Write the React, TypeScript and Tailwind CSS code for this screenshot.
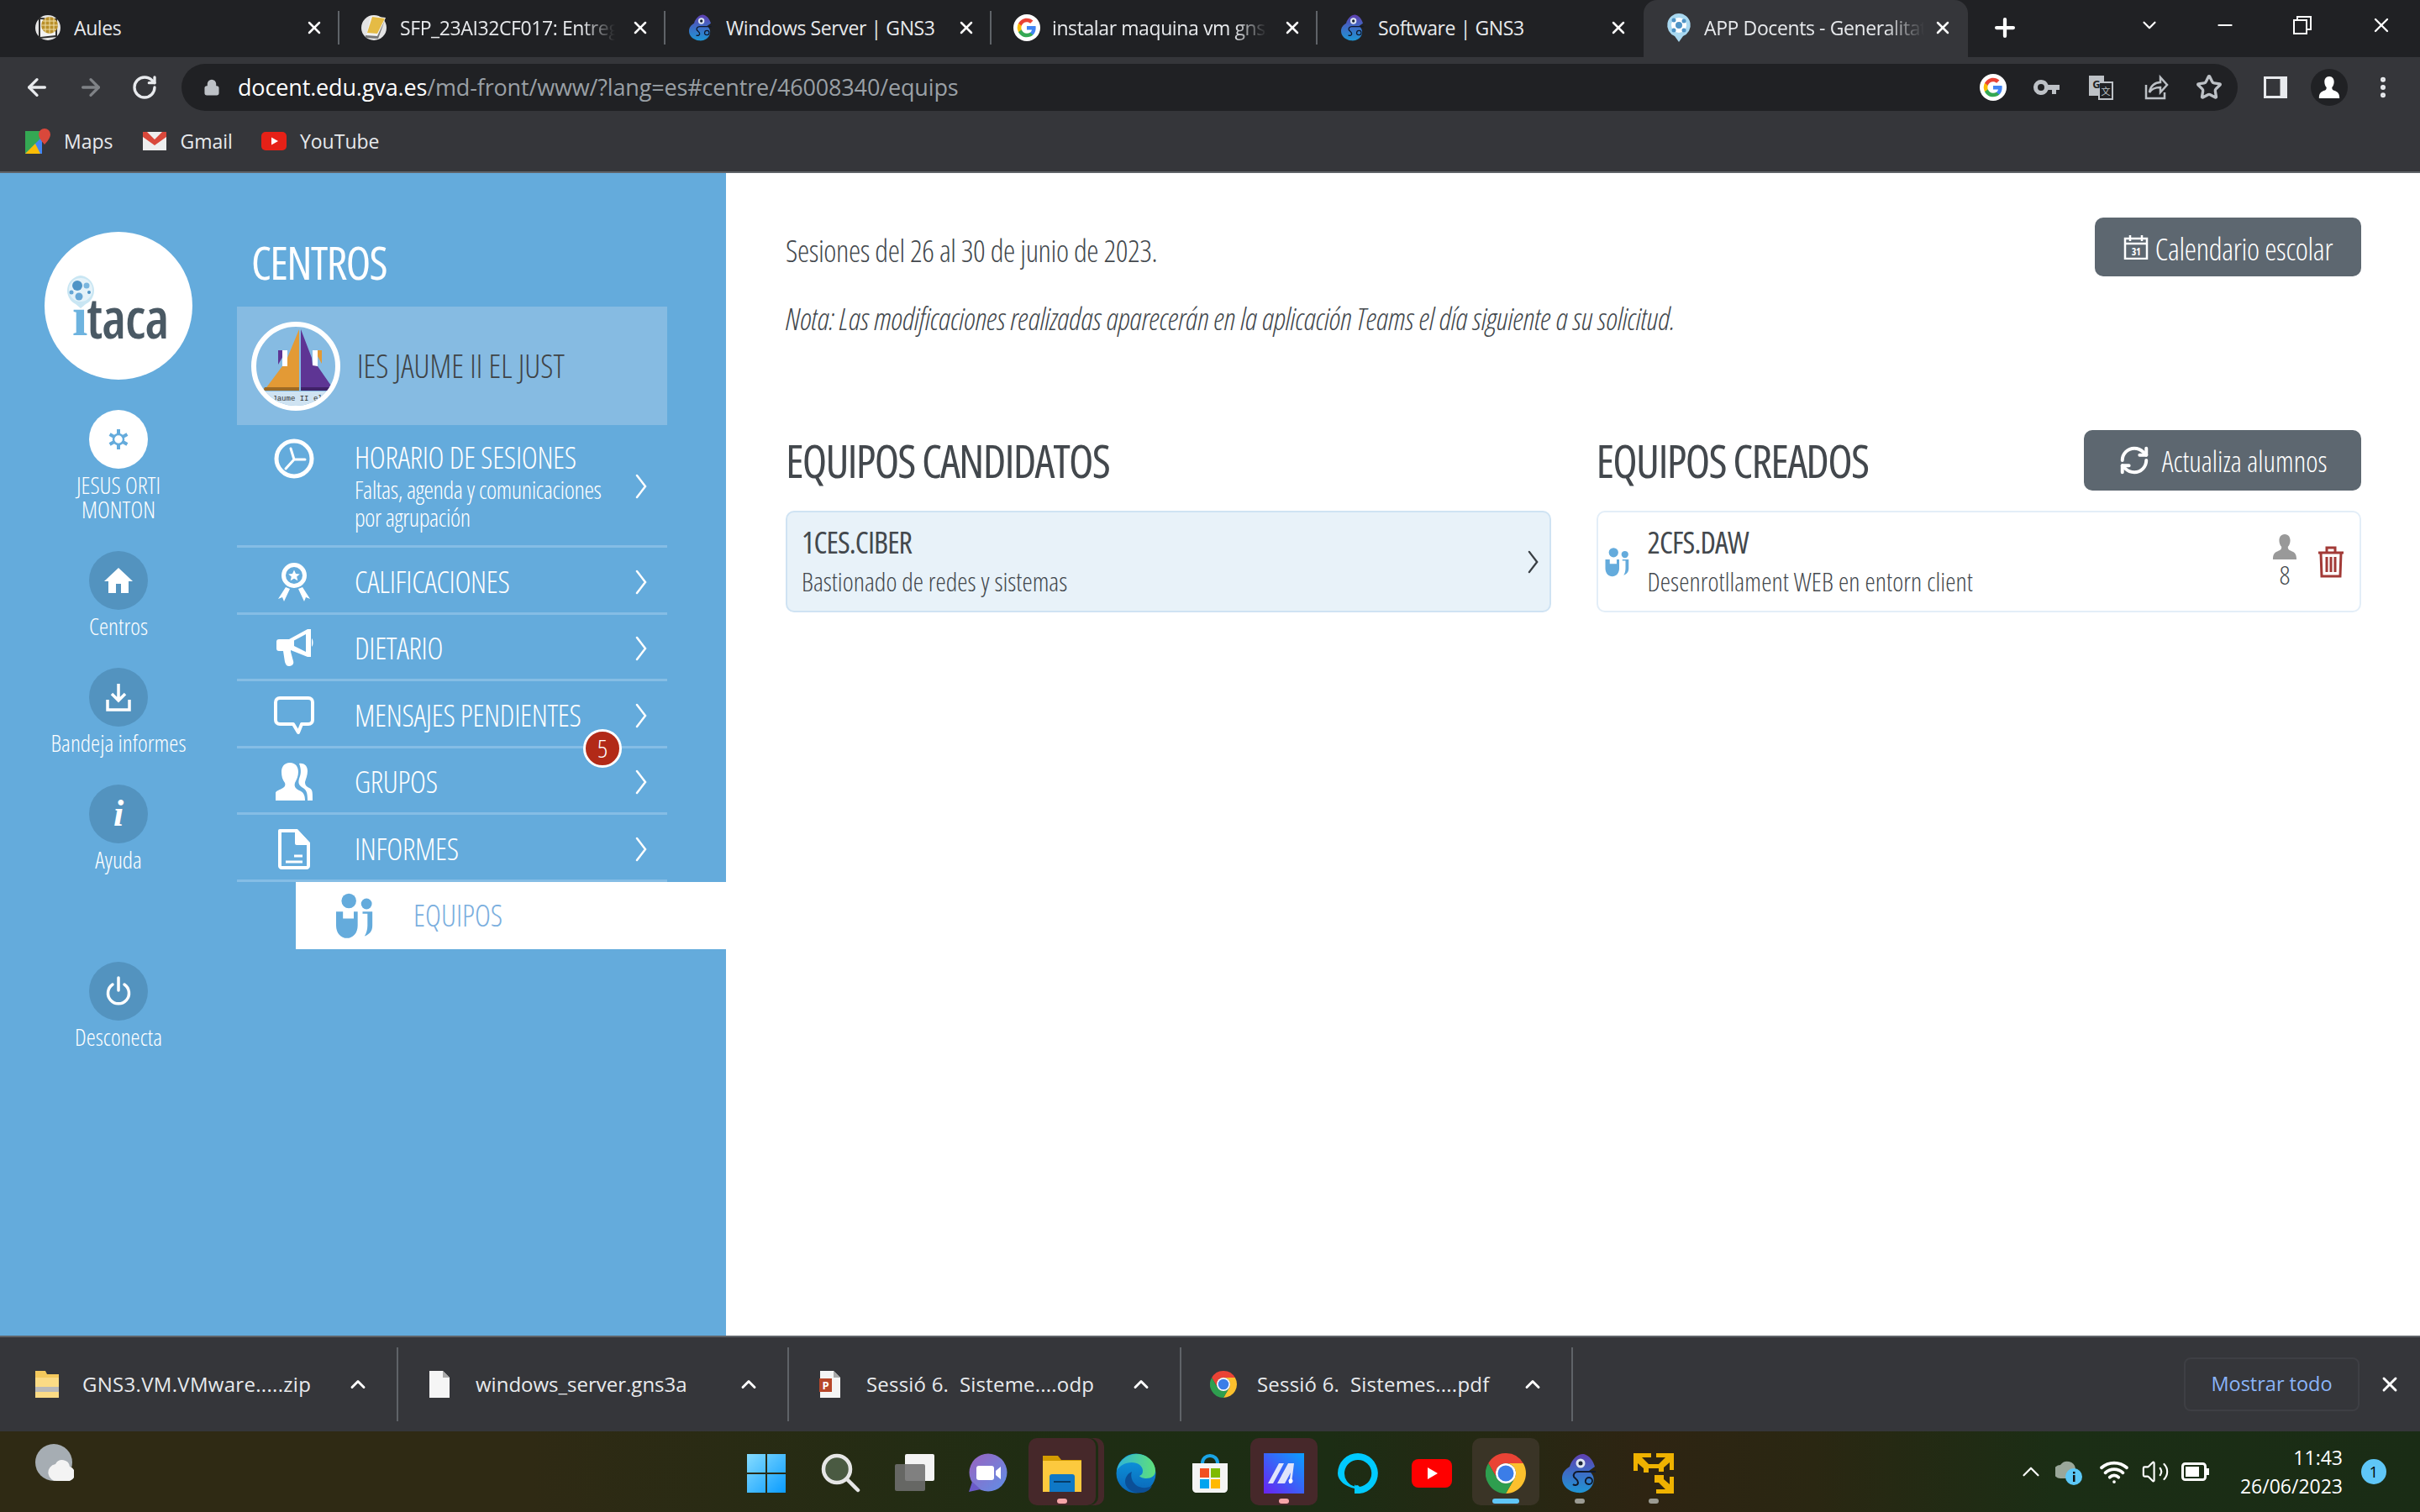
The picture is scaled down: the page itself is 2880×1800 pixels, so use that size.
import { ReactNode } from "react";
import { ArrowLeft, ArrowRight, RotateCw, Lock, Plus, X, ChevronDown, ChevronUp, Minus, MoreVertical, RefreshCw, Star, Wifi, Volume2 } from "lucide-react";

const cond = "font-['Open_Sans',sans-serif] font-light font-stretch-condensed";
const ui = "font-['Open_Sans',sans-serif]";

const GoogleG = ({ s = 32 }: { s?: number }) => (
  <svg width={s} height={s} viewBox="0 0 48 48">
    <circle cx="24" cy="24" r="24" fill="#fff" />
    <path d="M40 24.500c0-1.200-.1-2.300-.3-3.400H24v6.500h9c-.4 2.100-1.600 3.900-3.300 5.100v4.200h5.400c3.100-2.900 4.900-7.100 4.900-12.400z" fill="#4285f4" />
    <path d="M24 41c4.500 0 8.300-1.500 11.100-4.100l-5.400-4.200c-1.500 1-3.400 1.600-5.700 1.600-4.400 0-8.100-3-9.400-6.900H9v4.300C11.800 37.200 17.500 41 24 41z" fill="#34a853" />
    <path d="M14.600 27.400c-.7-2.100-.7-4.700 0-6.800v-4.300H9a17 17 0 0 0 0 15.400z" fill="#fbbc05" />
    <path d="M24 13.700c2.500 0 4.700.9 6.400 2.500l4.800-4.800C32.300 8.700 28.500 7 24 7 17.500 7 11.800 10.800 9 16.300l5.600 4.300c1.300-3.900 5-6.900 9.400-6.900z" fill="#ea4335" />
  </svg>
);

const ChromeLogo = ({ s = 48 }: { s?: number }) => (
  <svg width={s} height={s} viewBox="0 0 48 48">
    <path d="M3.200 12A24 24 0 0 1 44.780 12H24A12 12 0 0 0 13.600 30z" fill="#ea4335" />
    <path d="M44.780 12A24 24 0 0 1 24 48L34.400 30A12 12 0 0 0 24 12z" fill="#fbc02d" />
    <path d="M24 48A24 24 0 0 1 3.200 12L13.600 30A12 12 0 0 0 34.400 30z" fill="#2e9e4f" />
    <circle cx="24" cy="24" r="12" fill="#fff" />
    <circle cx="24" cy="24" r="9.500" fill="#3b7de8" />
  </svg>
);

const Chameleon = ({ s = 32 }: { s?: number }) => (
  <svg width={s} height={s} viewBox="0 0 48 48">
    <defs>
      <linearGradient id="cham" x1="0" y1="0" x2="0" y2="1">
        <stop offset="0" stopColor="#5f3fb0" />
        <stop offset="0.45" stopColor="#3f6ac4" />
        <stop offset="1" stopColor="#1f95d4" />
      </linearGradient>
    </defs>
    <path d="M12 16C15 6 23 0 29 1c7 2 11 8 13 15l-7 5c5 4 7 9 5 15-3 8-11 12-19 11C11 46 3 39 3 30c0-7 4-11 9-14z" fill="url(#cham)" />
    <circle cx="25" cy="12" r="5.500" fill="#dfe6f2" />
    <circle cx="25" cy="12" r="2.500" fill="#1a2438" />
    <path d="M43 22H22c-4 0-6 3-5 6 1 2 5 3 5 7 0 3-4 4-6 2" fill="none" stroke="#10192a" strokeWidth="2" />
    <path d="M31 33a4 4 0 1 1 4 4c-3 0-5-2-4-5" fill="none" stroke="#10192a" strokeWidth="1.800" />
  </svg>
);

const TeamIcon = ({ s = 48, c = "#64abdc" }: { s?: number; c?: string }) => (
  <svg width={s} height={s} viewBox="0 0 48 48">
    <circle cx="19" cy="9" r="7.500" fill={c} />
    <circle cx="37" cy="12" r="5.500" fill={c} />
    <path d="M6 20h7v7h11v-7h4v14c0 8-5 13-11 13S6 42 6 34z" fill={c} />
    <path d="M33 20h10v14c0 6-3 9-8 11 2-3 3-7 3-11V22h-5z" fill={c} />
  </svg>
);

const Person = ({ s = 32, c = "#999" }: { s?: number; c?: string }) => (
  <svg width={s} height={s} viewBox="0 0 32 32">
    <path d="M16 0c5 0 7 4 7 8 0 3-1 6-3 8 0 3 1 4 4 5 4 2 7 3 7 11H1c0-8 3-9 7-11 3-1 4-2 4-5-2-2-3-5-3-8 0-4 2-8 7-8z" fill={c} />
  </svg>
);

const menuIcons: Record<string, ReactNode> = {
  clock: (
    <svg width="48" height="48" viewBox="0 0 48 48" fill="none" stroke="#fff" strokeWidth="5" strokeLinecap="round">
      <circle cx="24" cy="24" r="21" />
      <path d="M24 25 20 12M24 25h13M24 25 14 36" strokeWidth="3" />
    </svg>
  ),
  award: (
    <svg width="48" height="48" viewBox="0 0 48 48">
      <circle cx="24" cy="16" r="12.500" fill="none" stroke="#fff" strokeWidth="5" />
      <path d="M24 9.500l2 4.500 4.800.4-3.600 3.100 1.100 4.700-4.300-2.500-4.300 2.500 1.100-4.700-3.600-3.100 4.800-.4z" fill="#fff" />
      <path d="M14 30l5 2-7 15-2-5-5 2zM34 30l-5 2 7 15 2-5 5 2z" fill="#fff" />
    </svg>
  ),
  mega: (
    <svg width="48" height="48" viewBox="0 0 48 48">
      <path d="M3 16c0-2 1-3 3-3h12L40 1h4v33h-4L20 26v2l3 11c1 3-1 6-5 6-3 0-4-2-5-5l-2-13H6c-2 0-3-1-3-3z" fill="#fff" />
      <path d="M24 14.500 38 7v21l-14-7z" fill="#64abdc" />
      <path d="M45 12c2 2 2 8 0 10z" fill="#fff" />
    </svg>
  ),
  bubble: (
    <svg width="48" height="48" viewBox="0 0 48 48">
      <path d="M7 3h34c3 0 5 2 5 5v21c0 3-2 5-5 5H33l-4 10-6-10H7c-3 0-5-2-5-5V8c0-3 2-5 5-5z" fill="none" stroke="#fff" strokeWidth="4" strokeLinejoin="round" />
    </svg>
  ),
  people: (
    <svg width="48" height="48" viewBox="0 0 48 48">
      <path d="M30 2c7-1 10 4 10 9 0 5-2 9-3 13 0 3 1 5 5 7 4 2 4 4 4 15h-6c0-9-1-13-7-16-4-3-4-6-3-10 2-5 3-10 0-18z" fill="#fff" />
      <path d="M19 1c7 0 10 5 10 11 0 5-2 9-4 13-1 4 0 6 5 9 5 2 7 5 7 12H2v-9c0-2 3-3 7-5 4-2 5-4 4-7-3-4-4-8-4-13C9 6 12 1 19 1z" fill="#fff" />
    </svg>
  ),
  doc: (
    <svg width="48" height="48" viewBox="0 0 48 48" fill="none" stroke="#fff" strokeWidth="4" strokeLinejoin="round">
      <path d="M7 2h20l14 15v27c0 1-1 2-2 2H9c-1 0-2-1-2-2z" />
      <path d="M27 2v15h14z" fill="#fff" />
      <path d="M14 39h20M24 32h10" strokeWidth="3" />
    </svg>
  ),
};

const menu = [
  { icon: "award", label: "CALIFICACIONES" },
  { icon: "mega", label: "DIETARIO" },
  { icon: "bubble", label: "MENSAJES PENDIENTES", badge: "5" },
  { icon: "people", label: "GRUPOS" },
  { icon: "doc", label: "INFORMES" },
];

const Chevron = ({ c = "#fff", h = 30 }: { c?: string; h?: number }) => (
  <svg width={h * 0.5} height={h} viewBox="0 0 15 30" fill="none" stroke={c} strokeWidth="2.500" strokeLinecap="round">
    <path d="M2 2l10 13L2 28" />
  </svg>
);

const RailItem = ({ icon, label, className, light }: { icon: ReactNode; label: ReactNode; className: string; light?: boolean }) => (
  <div className={`flex flex-col items-center ${className}`}>
    <div className={`flex h-[70px] w-[70px] items-center justify-center rounded-full ${light ? "bg-white" : "bg-[#5393bf]"}`}>{icon}</div>
    <div className={`${cond} mt-[5px] text-center text-[28px] leading-[29px] text-white`}>{label}</div>
  </div>
);

const Rail = () => (
  <div className="flex w-[282px] shrink-0 flex-col items-center pt-[70px]">
    <div className="flex h-[176px] w-[176px] flex-col rounded-full bg-white pt-[51px]">
      <svg width="38" height="41" viewBox="0 0 38 41" className="relative z-10 ml-[24px] shrink-0">
        <path d="M19 1a18 18 0 0 1 6 34l-6 5-6-5A18 18 0 0 1 19 1z" fill="#c9e6f3" />
        <circle cx="19" cy="18" r="14" fill="#e4f2f9" />
        <circle cx="15" cy="13" r="6" fill="#4f94c6" />
        <circle cx="26" cy="13" r="3.500" fill="#7ab6de" />
        <circle cx="29" cy="21" r="2" fill="#4f94c6" />
        <circle cx="17" cy="26" r="4.500" fill="#66a7d6" />
        <circle cx="8" cy="21" r="2.500" fill="#66a7d6" />
      </svg>
      <div className={`${ui} -mt-[15px] ml-[33px] flex whitespace-nowrap text-[66px] font-semibold leading-[48px] tracking-[-1px] font-stretch-semi-condensed text-[#4a5964]`}>
        <span className="font-['Liberation_Serif',serif] font-bold text-[#6db3df]">i</span>taca
      </div>
    </div>
    <RailItem
      light
      className="mt-[36px]"
      label={<>JESUS ORTI<br />MONTON</>}
      icon={
        <svg width="28" height="30" viewBox="0 0 28 30" fill="none" stroke="#64abdc">
          <circle cx="14" cy="15" r="6" strokeWidth="2.500" />
          <path d="M14 9V3M14 21v6M8.800 12 3.600 9M19.200 18l5.200 3M8.800 18l-5.200 3M19.200 12l5.200-3" strokeWidth="4" />
        </svg>
      }
    />
    <RailItem
      className="mt-[35px]"
      label="Centros"
      icon={
        <svg width="36" height="36" viewBox="0 0 36 36" fill="#fff">
          <path d="M18 3 1 19h5v14h9V22h6v11h9V19h5z" />
        </svg>
      }
    />
    <RailItem
      className="mt-[35px]"
      label="Bandeja informes"
      icon={
        <svg width="30" height="34" viewBox="0 0 30 34" fill="none" stroke="#fff" strokeWidth="3.500">
          <path d="M15 1v19M7 13l8 8 8-8M2 20v12h26V20" />
        </svg>
      }
    />
    <RailItem
      className="mt-[35px]"
      label="Ayuda"
      icon={<span className="font-['Liberation_Serif',serif] text-[44px] font-bold italic leading-none text-white">i</span>}
    />
    <RailItem
      className="mt-[107px]"
      label="Desconecta"
      icon={
        <svg width="30" height="36" viewBox="0 0 30 36" fill="none" stroke="#fff" strokeWidth="3.500" strokeLinecap="round">
          <path d="M15 2v15M8 10a12.500 12.500 0 1 0 14 0" />
        </svg>
      }
    />
  </div>
);

const SchoolLogo = () => (
  <div className="h-[106px] w-[106px] shrink-0 overflow-hidden rounded-full border-[6px] border-white">
    <svg width="94" height="94" viewBox="0 0 94 94">
      <path d="M26 28h10L26 45z" fill="#5e3594" />
      <path d="M69 28h9v16z" fill="#e39a35" />
      <path d="M31 28h6v19h-6zM67 28h6v19h-6z" fill="#fff" />
      <path d="M51 3v72H10l21-28h6V37z" fill="#e39a35" />
      <path d="M53 3l13 34 1 9 6 1 18 26v3H53z" fill="#5e3594" />
      <path d="M10 72h41v4H8z" fill="#9d6a25" />
      <path d="M53 72h38v4H53z" fill="#402267" />
      <rect x="0" y="77" width="94" height="17" fill="#cfe3f2" />
      <text x="49" y="88" textAnchor="middle" fontSize="9" fontFamily="Liberation Mono" fill="#333">Jaume II el</text>
    </svg>
  </div>
);

const Sidebar = () => (
  <aside className="flex w-[864px] shrink-0 bg-[#64abdc]">
    <Rail />
    <div className="flex min-w-0 flex-1 flex-col">
      <h2 className={`${cond} ml-[17px] mt-[78px] h-[81px] text-[54px] font-normal leading-[56px] tracking-[-1.600px] text-white`}>CENTROS</h2>
      <div className="mr-[70px] flex h-[141px] items-center bg-[#86bbe2] pl-[17px]">
        <SchoolLogo />
        <span className={`${cond} ml-[20px] text-[38px] text-[#3f4346]`}>IES JAUME II EL JUST</span>
      </div>
      <div className="mr-[70px] flex h-[146px] border-b-[3px] border-[#85bde5]">
        <div className="ml-[44px] mt-[16px] h-[48px] w-[48px] shrink-0">{menuIcons.clock}</div>
        <div className="ml-[48px] mt-[17px] w-[310px]">
          <div className={`${cond} text-[36px] leading-[43px] tracking-[-0.300px] text-white`}>HORARIO DE SESIONES</div>
          <div className={`${cond} text-[29px] leading-[33px] tracking-[-0.400px] text-white`}>Faltas, agenda y comunicaciones por agrupación</div>
        </div>
        <div className="ml-auto mr-[23px] mt-[58px]"><Chevron /></div>
      </div>
      {menu.map((m) => (
        <div key={m.label} className="relative mr-[70px] flex h-[79.500px] items-center border-b-[3px] border-[#85bde5] pt-[5px]">
          <div className="ml-[44px] h-[48px] w-[48px] shrink-0">{menuIcons[m.icon]}</div>
          <span className={`${cond} ml-[48px] text-[36px] tracking-[-0.300px] text-white`}>{m.label}</span>
          <div className="ml-auto mr-[23px] flex"><Chevron /></div>
          {m.badge && (
            <div className={`${ui} absolute bottom-[-26px] right-[54px] z-10 flex h-[46px] w-[46px] items-center justify-center rounded-full border-[3px] border-white bg-[#b22a17] text-[30px] font-light font-stretch-condensed text-white`}>
              {m.badge}
            </div>
          )}
        </div>
      ))}
      <div className="ml-[70px] flex h-[80px] items-center bg-white">
        <div className="ml-[41px] h-[56px] w-[56px]"><TeamIcon s={56} /></div>
        <span className={`${cond} ml-[43px] text-[36px] text-[#7aaede]`}>EQUIPOS</span>
      </div>
    </div>
  </aside>
);

const GreyButton = ({ children, className }: { children: ReactNode; className: string }) => (
  <div className={`${cond} flex items-center justify-center rounded-[10px] bg-[#5d6770] text-white ${className}`}>{children}</div>
);

const Main = () => (
  <main className="relative min-w-0 flex-1 bg-white pl-[71px] pr-[70px] pt-[53px] text-[#43484d]">
    <div className="flex justify-between">
      <p className={`${cond} mt-[13px] text-[36px] tracking-[-0.400px]`}>Sesiones del 26 al 30 de junio de 2023.</p>
      <GreyButton className="h-[70px] w-[317px] gap-[8px] text-[36px] tracking-[-0.300px]">
        <svg width="30" height="30" viewBox="0 0 30 30" fill="none" stroke="#fff" strokeWidth="2.500">
          <path d="M2 5h26v24H2zM2 11h26" />
          <path d="M8 1v7M22 1v7" />
          <text x="15" y="25" textAnchor="middle" fontSize="12" fontWeight="700" fontFamily="Open Sans" fill="#fff" stroke="none">31</text>
        </svg>
        <span className="pt-[6px]">Calendario escolar</span>
      </GreyButton>
    </div>
    <p className={`${cond} mt-[24px] text-[36px] italic tracking-[-0.160px]`}>Nota: Las modificaciones realizadas aparecerán en la aplicación Teams el día siguiente a su solicitud.</p>
    <div className="mt-[105px] grid grid-cols-2 gap-[54px]">
      <section>
        <h2 className={`${cond} flex h-[72px] items-center text-[54px] font-normal tracking-[-1.800px]`}>EQUIPOS CANDIDATOS</h2>
        <div className="mt-[24px] flex h-[121px] items-center rounded-[10px] border-2 border-[#cfe3f3] bg-[#e8f2f9] pl-[17px] pr-[12px]">
          <div>
            <div className={`${cond} text-[36px] font-normal leading-[46px] tracking-[-0.900px]`}>1CES.CIBER</div>
            <div className={`${cond} text-[31px] leading-[46px]`}>Bastionado de redes y sistemas</div>
          </div>
          <div className="ml-auto"><Chevron c="#3a3f44" h={28} /></div>
        </div>
      </section>
      <section>
        <div className="flex h-[72px] items-center justify-between">
          <h2 className={`${cond} text-[54px] font-normal tracking-[-1.700px]`}>EQUIPOS CREADOS</h2>
          <GreyButton className="h-[72px] w-[330px] gap-[14px] text-[34px]">
            <RefreshCw size={38} strokeWidth={2.500} />
            <span className="pt-[2px]">Actualiza alumnos</span>
          </GreyButton>
        </div>
        <div className="mt-[24px] flex h-[121px] items-center rounded-[10px] border-2 border-[#e3eef8] pl-[4px] pr-[18px]">
          <TeamIcon s={36} />
          <div className="ml-[19px]">
            <div className={`${cond} text-[36px] font-normal leading-[46px] tracking-[-0.900px]`}>2CFS.DAW</div>
            <div className={`${cond} text-[31px] leading-[46px] tracking-[0.100px]`}>Desenrotllament WEB en entorn client</div>
          </div>
          <div className="ml-auto flex flex-col items-center">
            <Person s={30} />
            <span className={`${cond} text-[31px] leading-[36px]`}>8</span>
          </div>
          <svg width="32" height="38" viewBox="0 0 32 38" fill="none" stroke="#a23a37" strokeWidth="3" className="ml-[24px]">
            <path d="M1 8h30M11 7V2h10v5M4 8l1 28h22l1-28M11 13v18M16 13v18M21 13v18" />
          </svg>
        </div>
      </section>
    </div>
  </main>
);

const AulesIcon = () => (
  <svg width="32" height="32" viewBox="0 0 32 32">
    <circle cx="15" cy="16" r="15" fill="#e4e4e4" />
    <path d="M4 4l22 1v22L4 29z" fill="#2e2e2e" />
    <path d="M6 6l18 1v18L6 27z" fill="#f2f2f2" />
    <circle cx="17" cy="13" r="10" fill="#b98f2a" />
    <path d="M7 13h20M17 3v20M9 8h16M9 18h16M12 4v18M22 4v18" stroke="#f0dfa8" strokeWidth="1" />
  </svg>
);

const SfpIcon = () => (
  <svg width="32" height="32" viewBox="0 0 32 32">
    <circle cx="15" cy="16" r="15" fill="#e4e4e4" />
    <path d="M11 2l18 2-9 22-14-1z" fill="#f2f2f2" />
    <path d="M13 3l15 2-9 18L7 22z" fill="#e5bb45" />
    <path d="M5 25l14 1 9-19-8 22-15-1z" fill="#777" />
  </svg>
);

const tabs = [
  { t: "Aules", i: <AulesIcon /> },
  { t: "SFP_23AI32CF017: Entrega", i: <SfpIcon />, fade: true },
  { t: "Windows Server | GNS3", i: <Chameleon /> },
  { t: "instalar maquina vm gns3", i: <GoogleG />, fade: true },
  { t: "Software | GNS3", i: <Chameleon /> },
];

const TabStrip = () => (
  <div className={`${ui} flex h-[68px] shrink-0 items-end bg-[#202124] pl-[16px] text-[23px] tracking-[-0.400px] text-[#e8eaed]`}>
    {tabs.map((tab, i) => (
      <div key={tab.t} className="flex h-[68px] w-[388px] shrink-0 items-center pb-[2px]">
        <div className="flex h-[40px] w-full items-center border-r-2 border-[#5f6368] pl-[26px] pr-[16px]" style={i === 4 ? { borderRightColor: "transparent" } : undefined}>
          <div className="h-[32px] w-[32px] shrink-0">{tab.i}</div>
          <span className={`ml-[14px] min-w-0 flex-1 overflow-hidden whitespace-nowrap ${tab.fade ? "pr-[12px] [mask-image:linear-gradient(to_right,black_82%,transparent_97%)]" : ""}`}>{tab.t}</span>
          <X size={24} strokeWidth={2.500} className="ml-[10px] shrink-0 text-white" />
        </div>
      </div>
    ))}
    <div className="flex h-[68px] w-[386px] shrink-0 items-center rounded-t-[16px] bg-[#35363a] pb-[2px] pl-[26px] pr-[18px]">
      <svg width="32" height="36" viewBox="0 0 32 36" className="shrink-0">
        <path d="M16 1a14 14 0 0 1 5 27l-5 7-5-7A14 14 0 0 1 16 1z" fill="#a9d8f0" />
        <circle cx="16" cy="15" r="9" fill="#fff" />
        <circle cx="16" cy="15" r="4" fill="#4f94c6" />
        <circle cx="10" cy="9" r="2.500" fill="#4f94c6" />
        <circle cx="22" cy="10" r="2.500" fill="#4f94c6" />
        <circle cx="10" cy="21" r="2.500" fill="#4f94c6" />
        <circle cx="22" cy="21" r="2.500" fill="#4f94c6" />
      </svg>
      <span className="ml-[14px] min-w-0 flex-1 overflow-hidden whitespace-nowrap [mask-image:linear-gradient(to_right,black_82%,transparent)]">APP Docents - Generalitat Valenciana</span>
      <X size={24} strokeWidth={2.500} className="ml-[10px] shrink-0 text-white" />
    </div>
    <div className="flex h-[68px] flex-1 items-center pb-[2px] text-white">
      <Plus size={34} strokeWidth={3} className="ml-[27px]" />
      <ChevronDown size={26} strokeWidth={2} className="ml-[142px] -mt-[6px]" />
      <Minus size={26} strokeWidth={2} className="ml-[64px] -mt-[6px]" />
      <svg width="22" height="22" viewBox="0 0 22 22" fill="none" stroke="#fff" strokeWidth="2" className="ml-[68px] -mt-[6px]">
        <path d="M1 5h15v16H1zM5 5V1h16v15h-4" />
      </svg>
      <X size={28} strokeWidth={2} className="ml-[69px] -mt-[6px]" />
    </div>
  </div>
);

const Toolbar = () => (
  <div className="flex h-[64px] shrink-0 items-center bg-[#35363a] pl-[28px] pt-[8px]">
    <ArrowLeft size={32} strokeWidth={2.500} className="text-[#e8eaed]" />
    <ArrowRight size={32} strokeWidth={2.500} className="ml-[32px] text-[#7f8286]" />
    <RotateCw size={32} strokeWidth={2.500} className="ml-[32px] text-[#e8eaed]" />
    <div className="ml-[28px] flex h-[56px] w-[2447px] items-center rounded-full bg-[#202124] pl-[26px]">
      <Lock size={20} fill="#bdc1c6" strokeWidth={2.500} className="text-[#bdc1c6]" />
      <span className={`${ui} ml-[21px] text-[27px] tracking-[-0.150px] text-white`}>
        docent.edu.gva.es<span className="text-[#9aa0a6]">/md-front/www/?lang=es#centre/46008340/equips</span>
      </span>
      <div className="ml-auto flex items-center pr-[18px]">
        <GoogleG s={32} />
        <svg width="32" height="20" viewBox="0 0 32 20" fill="#bdc1c6" className="ml-[32px]">
          <path d="M9 1a9 9 0 0 1 8.500 6H31v6h-4v5h-5v-5h-4.500A9 9 0 1 1 9 1zm0 5a4 4 0 1 0 0 8 4 4 0 0 0 0-8z" />
        </svg>
        <svg width="32" height="32" viewBox="0 0 32 32" className="ml-[32px]">
          <path d="M2 2h18v24H2z" fill="#bdc1c6" />
          <path d="M14 10h16v20H14z" fill="#202124" stroke="#bdc1c6" strokeWidth="2" />
          <text x="11" y="17" textAnchor="middle" fontSize="13" fontWeight="700" fontFamily="Open Sans" fill="#202124">G</text>
          <text x="22" y="25" textAnchor="middle" fontSize="11" fontFamily="Noto Sans CJK SC" fill="#bdc1c6">文</text>
        </svg>
        <svg width="32" height="32" viewBox="0 0 32 32" fill="none" stroke="#bdc1c6" strokeWidth="2.500" className="ml-[33px]">
          <path d="M5 13v16h22v-7M9 22c1-8 7-12 13-12V4l8 9-8 9v-6c-6 0-10 1-13 6z" />
        </svg>
        <Star size={32} strokeWidth={2.500} className="ml-[32px] text-[#bdc1c6]" />
      </div>
    </div>
    <svg width="28" height="26" viewBox="0 0 28 26" fill="none" stroke="#e8eaed" className="ml-[31px]">
      <path d="M1.500 1.500h25v23h-25z" strokeWidth="3" />
      <path d="M20 2v22h6V2z" fill="#e8eaed" />
    </svg>
    <div className="ml-[28px] flex h-[44px] w-[44px] items-center justify-center rounded-full bg-[#202124]"><Person s={26} c="#fff" /></div>
    <MoreVertical size={32} strokeWidth={2.500} className="ml-[26px] text-[#e8eaed]" />
  </div>
);

const Bookmarks = () => (
  <div className={`${ui} flex h-[74px] shrink-0 items-center border-b-2 border-[#5f6368] bg-[#35363a] pl-[30px] text-[23px] text-[#e8eaed]`}>
    <svg width="30" height="30" viewBox="0 0 30 30">
      <path d="M0 3h20v27H0z" fill="#34a853" />
      <path d="M0 30 20 10v20z" fill="#4285f4" />
      <path d="M0 30 12 18l6 12z" fill="#fbbc05" />
      <path d="M23 0a7 7 0 0 1 7 7c0 5-7 12-7 12s-7-7-7-12a7 7 0 0 1 7-7z" fill="#d9483b" />
    </svg>
    <span className="ml-[16px]">Maps</span>
    <svg width="30" height="24" viewBox="0 0 30 24" className="ml-[34px]">
      <path d="M1 1h28v22H1z" fill="#eee" />
      <path d="M1 1h5l9 9 9-9h5v6L15 17 1 7z" fill="#d9483b" />
    </svg>
    <span className="ml-[16px]">Gmail</span>
    <svg width="30" height="22" viewBox="0 0 30 22" className="ml-[34px]">
      <rect width="30" height="22" rx="5" fill="#e62117" />
      <path d="M12 6.500 20 11l-8 4.500z" fill="#fff" />
    </svg>
    <span className="ml-[16px]">YouTube</span>
  </div>
);

const ZipIcon = () => (
  <svg width="28" height="32" viewBox="0 0 28 32">
    <path d="M0 0h12l2 4h14v28H0z" fill="#f4c95d" />
    <path d="M0 8h28v24H0z" fill="#fbdb85" />
    <path d="M0 19h28v6H0z" fill="#b9b9b9" />
  </svg>
);

const PageIcon = ({ ppt }: { ppt?: boolean }) => (
  <svg width="26" height="32" viewBox="0 0 26 32">
    <path d="M1 0h16l8 8v24H1z" fill="#f5f5f5" />
    <path d="M17 0v8h8z" fill="#aaa" />
    {ppt && <rect x="0" y="9" width="15" height="16" fill="#b7472a" />}
    {ppt && <text x="7.500" y="22" textAnchor="middle" fontSize="13" fontWeight="700" fontFamily="Open Sans" fill="#fff">P</text>}
  </svg>
);

const downloads = [
  { w: "w-[474px] pl-[42px]", ls: "tracking-[0.300px]", t: "GNS3.VM.VMware.....zip", i: <ZipIcon /> },
  { w: "w-[465px] pl-[36px]", ls: "", t: "windows_server.gns3a", i: <PageIcon /> },
  { w: "w-[467px] pl-[36px]", ls: "tracking-[0.200px]", t: "Sessió 6.  Sisteme....odp", i: <PageIcon ppt /> },
  { w: "w-[466px] pl-[34px]", ls: "tracking-[0.200px]", t: "Sessió 6.  Sistemes....pdf", i: <ChromeLogo s={32} /> },
];

const DownloadBar = () => (
  <div className={`${ui} flex h-[114px] shrink-0 items-center border-t-2 border-[#5f6368] bg-[#35363a] text-[24px] text-[#e8eaed]`}>
    {downloads.map((d) => (
      <div key={d.t} className={`flex h-[88px] shrink-0 items-center border-r-2 border-[#5f6368] ${d.w}`}>
        <div className="flex w-[56px] shrink-0">{d.i}</div>
        <span className={`whitespace-pre ${d.ls}`}>{d.t}</span>
        <ChevronUp size={28} strokeWidth={2.500} className="ml-auto mr-[32px] text-white" />
      </div>
    ))}
    <div className="ml-auto flex h-[64px] w-[209px] items-center justify-center rounded-[8px] border-2 border-[#3e3f44] text-[23.500px] text-[#8ab4f8]">Mostrar todo</div>
    <X size={28} strokeWidth={2.500} className="ml-[22px] mr-[22px] text-white" />
  </div>
);

const taskIcons: { n: string; el: ReactNode; bg?: string; dot?: string }[] = [
  {
    n: "start",
    el: (
      <svg width="48" height="48" viewBox="0 0 48 48">
        <defs>
          <linearGradient id="win" x1="0" y1="0" x2="1" y2="1">
            <stop offset="0" stopColor="#86dcff" />
            <stop offset="1" stopColor="#0a9cff" />
          </linearGradient>
        </defs>
        <path d="M1 1h22v22H1zM25 1h22v22H25zM1 25h22v22H1zM25 25h22v22H25z" fill="url(#win)" />
      </svg>
    ),
  },
  {
    n: "search",
    el: (
      <svg width="48" height="48" viewBox="0 0 48 48" fill="#4a5a42" stroke="#e6e6e6" strokeWidth="4.500" strokeLinecap="round">
        <circle cx="20" cy="19" r="16" />
        <path d="M32 31l13 13" fill="none" />
      </svg>
    ),
  },
  {
    n: "views",
    el: (
      <svg width="48" height="48" viewBox="0 0 48 48">
        <rect x="13" y="1" width="35" height="32" fill="#f4f4f4" rx="2" />
        <rect x="1" y="13" width="36" height="32" fill="#707070" fillOpacity=".88" rx="2" />
      </svg>
    ),
  },
  {
    n: "chat",
    el: (
      <svg width="48" height="48" viewBox="0 0 48 48">
        <defs>
          <linearGradient id="chat" x1="0" y1="0" x2="1" y2="1">
            <stop offset="0" stopColor="#9a63c0" />
            <stop offset="1" stopColor="#5f8fe6" />
          </linearGradient>
        </defs>
        <circle cx="24" cy="23" r="22.500" fill="url(#chat)" />
        <path d="M5 34 1 46l14-3z" fill="#6a5ac8" />
        <rect x="10" y="15" width="21" height="17" rx="3" fill="#fff" />
        <path d="M33 21l6-5v15l-6-5z" fill="#fff" />
      </svg>
    ),
  },
  {
    n: "files",
    bg: "bg-[#46282a] shadow-[-2px_0_0_transparent,3px_0_0_#1e2d13,10px_0_0_#46282a]",
    dot: "w-[12px] bg-[#f5a5a8]",
    el: (
      <svg width="48" height="48" viewBox="0 0 48 48">
        <path d="M1 3h18l4 5h24v38H1z" fill="#d39b00" />
        <path d="M1 9h46v37H1z" fill="#fcc93e" />
        <path d="M9 28c0-2 1-3 3-3h24c2 0 3 1 3 3v18H9z" fill="#0f78c6" />
        <rect x="14" y="33" width="20" height="2" fill="#063d69" />
      </svg>
    ),
  },
  {
    n: "edge",
    el: (
      <svg width="48" height="48" viewBox="0 0 48 48">
        <defs>
          <linearGradient id="edgeA" x1="0" y1="0" x2="1" y2="0">
            <stop offset="0" stopColor="#2fb3d8" />
            <stop offset="1" stopColor="#5fe07a" />
          </linearGradient>
          <linearGradient id="edgeB" x1="0" y1="0" x2="0" y2="1">
            <stop offset="0" stopColor="#0d9ae0" />
            <stop offset="1" stopColor="#0a66b8" />
          </linearGradient>
        </defs>
        <circle cx="24" cy="24" r="23.500" fill="url(#edgeB)" />
        <path d="M1 21C3 9 13 1 25 1c13 0 22 10 22 20 0 6-5 9-11 9-3 0-7-1-8-3 3-1 4-3 4-6 0-6-6-10-13-10C11 11 4 15 1 21z" fill="url(#edgeA)" />
        <path d="M19 22c-5 2-8 7-8 12 0 6 6 12 14 13 9 1 15-2 18-8-6 3-14 3-19-1-5-4-7-11-5-16z" fill="#0b4f97" />
      </svg>
    ),
  },
  {
    n: "store",
    el: (
      <svg width="48" height="48" viewBox="0 0 48 48">
        <path d="M3 12h42v30c0 3-2 5-5 5H8c-3 0-5-2-5-5z" fill="#f4f4f4" />
        <path d="M15 12c0-12 18-12 18 0" fill="none" stroke="#1aa4e6" strokeWidth="4" />
        <rect x="12" y="18" width="11" height="11" fill="#f25022" />
        <rect x="25" y="18" width="11" height="11" fill="#7fba00" />
        <rect x="12" y="31" width="11" height="11" fill="#00a4ef" />
        <rect x="25" y="31" width="11" height="11" fill="#ffb900" />
      </svg>
    ),
  },
  {
    n: "mcafee",
    bg: "bg-[#46282a]",
    dot: "w-[12px] bg-[#f5a5a8]",
    el: (
      <svg width="48" height="48" viewBox="0 0 48 48">
        <defs>
          <linearGradient id="mg" x1="1" y1="0" x2="0" y2="1">
            <stop offset="0" stopColor="#0aa0ff" />
            <stop offset="1" stopColor="#6a22f0" />
          </linearGradient>
        </defs>
        <rect width="48" height="48" fill="url(#mg)" />
        <path d="M5 36 18 12h6L11 36zM16 36l13-24h7L33 36h-3l2-13-7 13z" fill="#dfe4fb" />
        <circle cx="32" cy="33" r="2.500" fill="#fff" />
      </svg>
    ),
  },
  {
    n: "alexa",
    el: (
      <svg width="48" height="48" viewBox="0 0 48 48">
        <path d="M24 0a24 24 0 0 1 2 47.900l-6 .1v-6c-10-2-20-9-20-18A24 24 0 0 1 24 0zm0 8a16 16 0 0 0-4 31.500V36c0 2 1 3 3 2 1 0 2 1 3 1.900A16 16 0 0 0 24 8z" fill="#00caff" fillRule="evenodd" />
      </svg>
    ),
  },
  {
    n: "youtube",
    el: (
      <svg width="48" height="48" viewBox="0 0 48 48">
        <rect y="7" width="48" height="34" rx="8" fill="#f00" />
        <path d="M19 17l12 7-12 7z" fill="#fff" />
      </svg>
    ),
  },
  { n: "chrome", bg: "bg-[#3a3426]", dot: "w-[32px] bg-[#5fc6f7]", el: <ChromeLogo s={48} /> },
  { n: "gns3", dot: "w-[12px] bg-[#9b9b93]", el: <Chameleon s={48} /> },
  {
    n: "vbox",
    dot: "w-[12px] bg-[#9b9b93]",
    el: (
      <svg width="48" height="48" viewBox="0 0 48 48" fill="#efb200">
        <path d="M0 0h21v5H10l8 8h12l8-8H27V0h21v20h-5v-9l-7 6v5h-6v-4H18v5h-6v-5l-7-6v9H0z" />
        <path d="M25 26h11v5l7 6v-9h5v20H27v-5h11l-8-8h-5z" />
      </svg>
    ),
  },
];

const Taskbar = () => (
  <div className="flex h-[96px] shrink-0 items-center bg-[linear-gradient(90deg,#2f2a14_0%,#2f2a14_22%,#1e2d13_45%,#1c2d14_55%,#2e2412_68%,#2a2712_75%,#1b2e15_85%,#1a2c15_100%)] text-white">
    <div className="flex w-[868px] shrink-0 pl-[42px]">
      <svg width="46" height="46" viewBox="0 0 46 46" className="-mt-[20px]">
        <circle cx="22" cy="22" r="22" fill="#a6adb3" />
        <path d="M27 44a10 10 0 0 1-3-20 9 9 0 0 1 17 3 9 9 0 0 1 0 17z" fill="#f3f3f3" />
      </svg>
    </div>
    <div className="flex h-full">
      {taskIcons.map((t) => (
        <div key={t.n} className="flex w-[88px] shrink-0 justify-center">
          <div className={`relative mt-[8px] flex h-[80px] w-[80px] justify-center rounded-[10px] pt-[18px] ${t.bg ?? ""}`}>
            {t.el}
            {t.dot && <span className={`absolute bottom-[2px] h-[6px] rounded-full ${t.dot}`} />}
          </div>
        </div>
      ))}
    </div>
    <div className={`${ui} ml-auto flex items-center pr-[40px]`}>
      <ChevronUp size={34} strokeWidth={1.500} />
      <svg width="32" height="32" viewBox="0 0 32 32" className="ml-[12px]">
        <path d="M6 24a8 8 0 0 1 0-16 10 10 0 0 1 18 4v12z" fill="#9aa79a" />
        <circle cx="22" cy="22" r="10" fill="#5cc8f8" />
        <rect x="21" y="20" width="2.500" height="8" fill="#111" />
        <rect x="21" y="16" width="2.500" height="2.500" fill="#111" />
      </svg>
      <Wifi size={36} strokeWidth={2.500} className="ml-[20px]" />
      <Volume2 size={34} strokeWidth={1.500} className="ml-[14px]" />
      <svg width="34" height="22" viewBox="0 0 34 22" className="ml-[14px]">
        <rect x="1.500" y="1.500" width="27" height="19" rx="3" fill="none" stroke="#fff" strokeWidth="3" />
        <rect x="5" y="5" width="16" height="12" fill="#fff" />
        <rect x="30" y="7" width="3" height="8" fill="#fff" />
      </svg>
      <div className="ml-[36px] text-right text-[23px] leading-[34px]">
        <div>11:43</div>
        <div>26/06/2023</div>
      </div>
      <div className="ml-[22px] flex h-[30px] w-[30px] items-center justify-center rounded-full bg-[#5fc6f7] text-[18px] text-black">1</div>
    </div>
  </div>
);

export default function App() {
  return (
    <div className="flex h-[1800px] w-[2880px] flex-col overflow-hidden">
      <TabStrip />
      <Toolbar />
      <Bookmarks />
      <div className="flex min-h-0 flex-1">
        <Sidebar />
        <Main />
      </div>
      <DownloadBar />
      <Taskbar />
    </div>
  );
}
